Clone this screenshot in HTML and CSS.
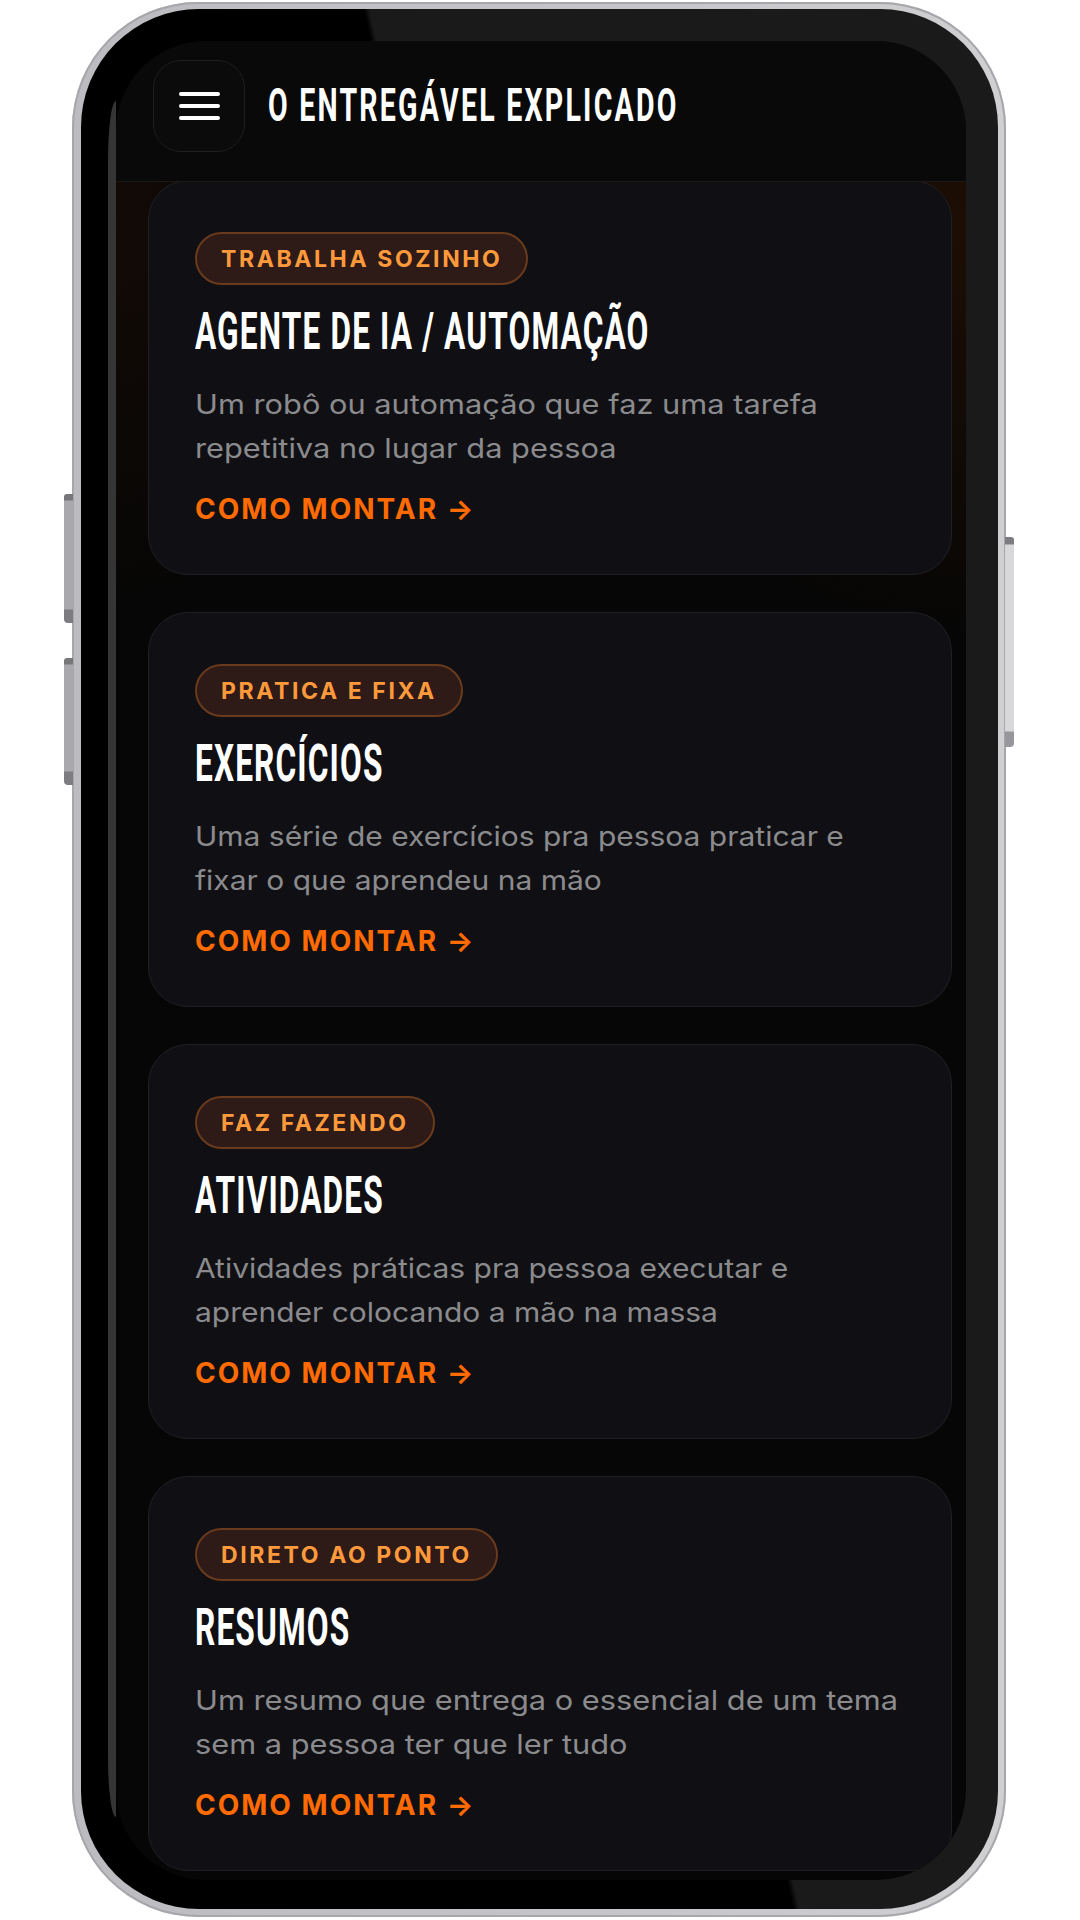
FILE: index.html
```html
<!DOCTYPE html>
<html lang="pt-BR">
<head>
<meta charset="utf-8">
<title>O Entregável Explicado</title>
<link rel="stylesheet" href="styles.css">
</head>
<body>
<div class="phone">
  <span class="side side-l1"></span>
  <span class="side side-l2"></span>
  <span class="side side-r"></span>
  <div class="bezel">
    <div class="screen">
      <header class="topbar">
        <button class="menu" aria-label="Menu">
          <span class="bar"></span><span class="bar"></span><span class="bar"></span>
        </button>
        <h1 class="brand">O ENTREGÁVEL EXPLICADO</h1>
      </header>
      <main class="list">
        <article class="card">
          <span class="tag">TRABALHA SOZINHO</span>
          <h2 class="card-title">AGENTE DE IA / AUTOMAÇÃO</h2>
          <p class="card-text">Um robô ou automação que faz uma tarefa<br>repetitiva no lugar da pessoa</p>
          <a class="card-link">COMO MONTAR <span class="arrow">→</span></a>
        </article>
        <article class="card">
          <span class="tag">PRATICA E FIXA</span>
          <h2 class="card-title">EXERCÍCIOS</h2>
          <p class="card-text">Uma série de exercícios pra pessoa praticar e<br>fixar o que aprendeu na mão</p>
          <a class="card-link">COMO MONTAR <span class="arrow">→</span></a>
        </article>
        <article class="card">
          <span class="tag">FAZ FAZENDO</span>
          <h2 class="card-title">ATIVIDADES</h2>
          <p class="card-text">Atividades práticas pra pessoa executar e<br>aprender colocando a mão na massa</p>
          <a class="card-link">COMO MONTAR <span class="arrow">→</span></a>
        </article>
        <article class="card">
          <span class="tag">DIRETO AO PONTO</span>
          <h2 class="card-title">RESUMOS</h2>
          <p class="card-text">Um resumo que entrega o essencial de um tema<br>sem a pessoa ter que ler tudo</p>
          <a class="card-link">COMO MONTAR <span class="arrow">→</span></a>
        </article>
      </main>
    </div>
  </div>
</div>
</body>
</html>
```
FILE: styles.css
```css
* { box-sizing: border-box; }
html, body { margin: 0; padding: 0; background: #fff; }
body { width: 1080px; height: 1920px; overflow: hidden; padding: 2px 0 0 72px; }

.phone {
  position: relative;
  width: 934px;
  height: 1915px;
  padding: 7px 8px 8px 9px;
  border-radius: 126px;
  background: linear-gradient(90deg, #bcbcc0 0%, #c6c6ca 60%, #d0d0d3 100%);
  box-shadow: inset 0 0 0 2px #a6a6ab;
}
.side { position: absolute; display: block; }
.side-l1, .side-l2 {
  left: -8px;
  width: 9px;
  border-radius: 3px 0 0 4px;
  background: linear-gradient(180deg, #77777a 0, #77777a 6px, #a9a9ad 7px, #a9a9ad calc(100% - 14px), #7d7d81 calc(100% - 13px));
}
.side-l1 { top: 492px; height: 129px; }
.side-l2 { top: 656px; height: 127px; }
.side-r {
  left: 933px;
  top: 535px;
  width: 9px;
  height: 210px;
  border-radius: 0 3px 4px 0;
  background: linear-gradient(180deg, #7d7d81 0, #7d7d81 7px, #d8d8da 8px, #d8d8da calc(100% - 16px), #97979b calc(100% - 15px));
}

.bezel {
  position: relative;
  height: 100%;
  padding: 32px 32px 29px 35px;
  border-radius: 118px;
  background: linear-gradient(77.25deg, #000 calc(50% + 38px), #1a1a1a calc(50% + 44px));
}
.bezel::before {
  content: "";
  position: absolute;
  left: 27px;
  top: 92px;
  bottom: 92px;
  width: 8px;
  background: #353535;
  border-radius: 100% 0 0 100% / 60px 0 0 60px;
}
.screen {
  height: 100%;
  display: flex;
  flex-direction: column;
  overflow: hidden;
  border-radius: 90px;
  background:
    radial-gradient(420px 420px at 100% 10%, #1d0e04 0%, rgba(29, 14, 4, 0) 100%),
    radial-gradient(300px 400px at 0% 10%, #120a05 0%, rgba(18, 10, 5, 0) 100%),
    #060606;
}

.topbar {
  position: relative;
  z-index: 2;
  flex: none;
  height: 141px;
  display: flex;
  align-items: flex-start;
  padding: 19px 0 0 37px;
  gap: 23px;
  background: #090909;
  border-bottom: 1px solid #1c1816;
}
.menu {
  width: 92px;
  height: 92px;
  flex: none;
  display: flex;
  flex-direction: column;
  align-items: center;
  justify-content: center;
  gap: 8px;
  padding: 0;
  background: #0b0b0b;
  border: 1px solid #1f1f1f;
  border-radius: 28px;
}
.bar { display: block; width: 41px; height: 4px; border-radius: 2px; background: #fff; }
.brand {
  margin: 0;
  color: #fff;
  font: 700 46px/90px Roboto, "Liberation Sans", sans-serif;
  letter-spacing: 3.6px;
  white-space: nowrap;
  transform: scaleX(0.62);
  transform-origin: left center;
}

.list {
  display: flex;
  flex-direction: column;
  gap: 37px;
  margin-top: -2px;
  padding: 0 14px 0 32px;
}
.card {
  flex: none;
  height: 395px;
  padding: 51px 46px 0;
  background: #101014;
  border: 1px solid #202024;
  border-radius: 40px;
}
.tag {
  display: inline-flex;
  align-items: center;
  height: 53px;
  padding: 1px 24px 0;
  border-radius: 27px;
  background: #2e1a16;
  border: 2px solid #6a3a1c;
  color: #ff9a3c;
  font: 700 23px/1 Inter, sans-serif;
  letter-spacing: 2.6px;
}
.card-title {
  margin: 16px 0 0;
  color: #fff;
  font: 700 51px/62px Roboto, "Liberation Sans", sans-serif;
  letter-spacing: 1.85px;
  white-space: nowrap;
  transform: scaleX(0.62);
  transform-origin: left center;
}
.card-text {
  margin: 20px 0 0;
  color: #8b8b8e;
  font: 400 27px/44px Inter, sans-serif;
  white-space: nowrap;
  transform: scaleX(1.14);
  transform-origin: left center;
}
.card:nth-child(2) .card-text,
.card:nth-child(3) .card-text { transform: scaleX(1.11); }
.card-link {
  display: block;
  margin-top: 18px;
  color: #ff6b00;
  font: 700 28px/40px Inter, sans-serif;
  letter-spacing: 2px;
}
.arrow { letter-spacing: 0; }
```
